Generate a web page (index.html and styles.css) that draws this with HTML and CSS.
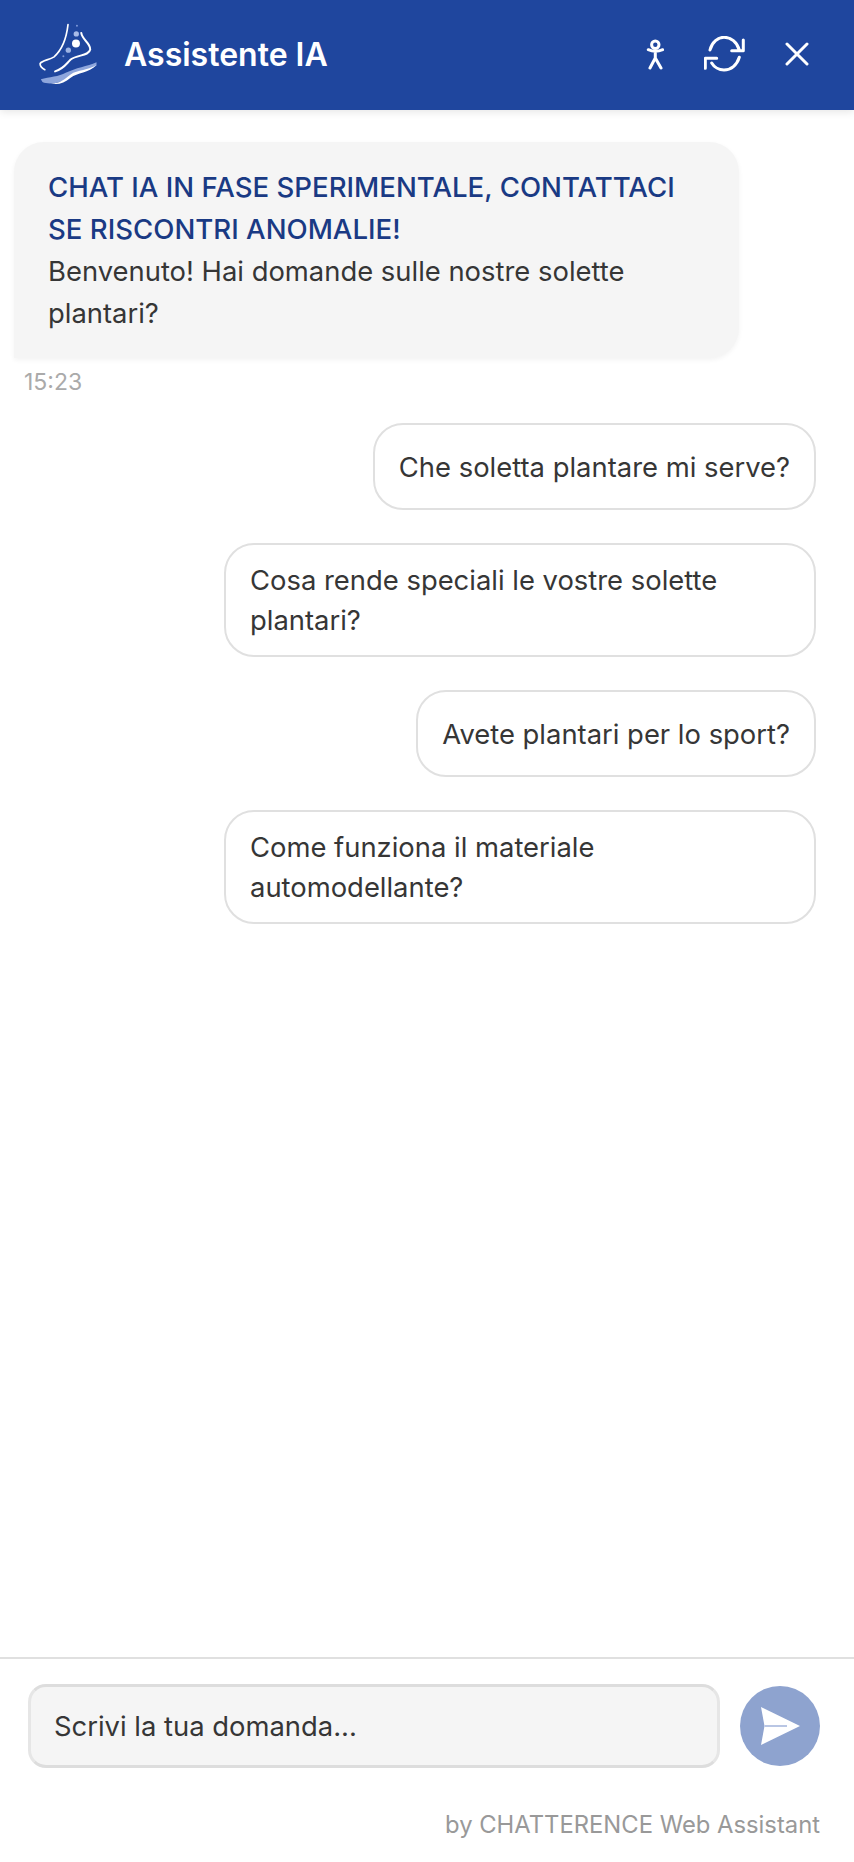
FILE: index.html
```html
<!DOCTYPE html>
<html lang="it">
<head>
	<meta charset="UTF-8">
	<title>Assistente IA</title>
	<link rel="stylesheet" href="styles.css">
</head>
<body>
<div class="chat">
	<header class="chat_head">
		<svg class="logo" viewBox="120 70 180 190" width="60" height="63">
			<path d="M207 75C203 110 190 150 165 172C150 182 130 182 123 192C122 200 130 207 137 211" fill="none" stroke="#fff" stroke-width="5" stroke-linecap="round"/>
			<path d="M247 100C250 122 275 130 274 150C270 170 235 165 215 180C200 195 195 207 168 216" fill="none" stroke="#fff" stroke-width="6" stroke-linecap="round"/>
			<circle cx="232" cy="103" r="8" fill="#a9bce8"/>
			<circle cx="231" cy="132" r="12" fill="#fff"/>
			<circle cx="208" cy="152" r="8" fill="#9db3e4"/>
			<circle cx="234" cy="78" r="3" fill="#7d98d8"/>
			<circle cx="193" cy="170" r="3" fill="#7d98d8"/>
			<path d="M125 240C150 232 180 232 200 220C230 205 265 200 293 188L293 198C275 215 240 215 215 230C195 250 150 258 130 248Z" fill="#8ea6dc"/>
			<path d="M155 252C185 252 195 240 215 225C235 212 270 212 292 197C270 222 235 220 215 235C195 252 175 258 155 252Z" fill="#fff"/>
		</svg>
		<div class="chat_title">Assistente IA</div>
		<div class="head_btns">
			<svg class="ico" viewBox="0 0 18 33" width="18" height="33">
				<circle cx="9.3" cy="6.7" r="3.7"/>
				<path d="M2.3 11.7Q9.3 15 16.7 11.7M9.3 14V20L4 30M9.3 20L15 30"/>
			</svg>
			<svg class="ico" viewBox="0 0 41 36" width="41" height="36">
				<path d="M6 14C8 6 14 1.3 20 1.3C27 1.3 33 6 35.3 14M39.3 4V14.7H27.7"/>
				<path d="M35.3 21.3C33 29 27 34 20 34C15 34 10 31 7.7 27M1.3 32.3V22.3H12.7"/>
			</svg>
			<svg class="ico" viewBox="0 0 24 24" width="24" height="24">
				<path d="M2 2L22 22M22 2L2 22"/>
			</svg>
		</div>
	</header>

	<main class="msgs">
		<div class="bubble">
			<div class="notice">CHAT IA IN FASE SPERIMENTALE, CONTATTACI SE RISCONTRI ANOMALIE!</div>
			Benvenuto! Hai domande sulle nostre solette plantari?
		</div>
		<div class="time">15:23</div>
		<div class="sugg_list">
			<div class="sugg">Che soletta plantare mi serve?</div>
			<div class="sugg">Cosa rende speciali le vostre solette plantari?</div>
			<div class="sugg">Avete plantari per lo sport?</div>
			<div class="sugg">Come funziona il materiale automodellante?</div>
		</div>
	</main>

	<footer class="chat_foot">
		<div class="input_row">
			<div class="input">Scrivi la tua domanda...</div>
			<div class="send">
				<svg viewBox="0 0 40 38" width="40" height="38">
					<path d="M0 0L39 19L0 38L3.5 19Z" fill="#fff"/>
					<path d="M3.5 18H26V20H3.5Z" fill="#b9c6e4"/>
				</svg>
			</div>
		</div>
		<div class="brand">by CHATTERENCE Web Assistant</div>
	</footer>
</div>
</body>
</html>
```

FILE: styles.css
```css
html, body {
	height: 100%;
	margin: 0;
}
body {
	background: #fff;
	color: #363636;
	font-family: Inter, "Liberation Sans", sans-serif;
	font-size: 27.4px;
}
.chat {
	display: flex;
	flex-direction: column;
	height: 100%;
}
.chat_head {
	display: flex;
	align-items: center;
	flex: none;
	box-sizing: border-box;
	height: 110px;
	padding: 0 45px 2px 39px;
	background: #1f469e;
	box-shadow: 0 2px 8px rgba(0, 0, 0, .1);
	color: #fff;
}
.logo {
	margin-right: 25px;
}
.chat_title {
	flex: 1;
	font-size: 32px;
	font-weight: 600;
}
.head_btns {
	display: flex;
	align-items: center;
	gap: 40px;
}
.ico {
	fill: none;
	stroke: #fff;
	stroke-width: 3;
	stroke-linecap: round;
	stroke-linejoin: round;
}
.msgs {
	flex: 1;
	padding: 32px 38px 0 14px;
}
.bubble {
	box-sizing: border-box;
	width: 725px;
	padding: 24px 34px;
	background: #f5f5f5;
	border-radius: 30px 30px 30px 0;
	box-shadow: 0 2px 5px rgba(0, 0, 0, .05);
	line-height: 42px;
}
.notice {
	color: #1a3a84;
	font-size: 27.6px;
	font-weight: 500;
}
.time {
	margin: 10px 0 0 10px;
	color: #aaa;
	font-size: 23px;
	line-height: 28px;
}
.sugg_list {
	display: flex;
	flex-direction: column;
	align-items: flex-end;
	gap: 33px;
	margin-top: 27px;
}
.sugg {
	display: flex;
	align-items: center;
	box-sizing: border-box;
	max-width: 592px;
	min-height: 87px;
	padding: 15px 24px;
	background: #fff;
	border: 2px solid #e0e0e0;
	border-radius: 30px;
	line-height: 40px;
}
.chat_foot {
	flex: none;
	height: 205px;
	box-sizing: border-box;
	padding: 25px 34px 0 28px;
	border-top: 2px solid #e0e0e0;
}
.input_row {
	display: flex;
	align-items: center;
	gap: 20px;
}
.input {
	flex: 1;
	box-sizing: border-box;
	height: 84px;
	padding: 0 23px;
	background: #f5f5f5;
	border: 3px solid #e6e6e6;
	border-top-color: #ddd;
	border-bottom-color: #ddd;
	border-radius: 18px;
	line-height: 78px;
}
.send {
	display: flex;
	align-items: center;
	justify-content: center;
	flex: none;
	width: 80px;
	height: 80px;
	padding-left: 2px;
	box-sizing: border-box;
	background: #8ea3cf;
	border-radius: 50%;
}
.brand {
	margin-top: 42px;
	color: #999;
	font-size: 23.8px;
	text-align: right;
}
```
